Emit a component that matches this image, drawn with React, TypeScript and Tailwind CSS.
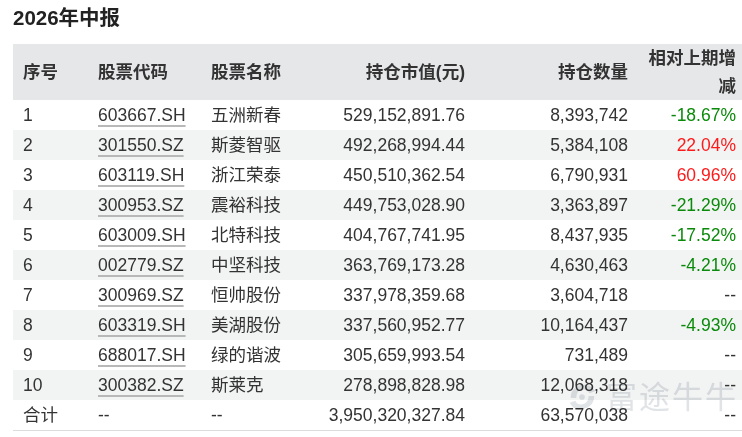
import React from 'react';

interface Holding {
  no: string;
  code: string;
  name: string;
  value: string;
  shares: string;
  change: string;
}

const rows: Holding[] = [
  { no: '1', code: '603667.SH', name: '五洲新春', value: '529,152,891.76', shares: '8,393,742', change: '-18.67%' },
  { no: '2', code: '301550.SZ', name: '斯菱智驱', value: '492,268,994.44', shares: '5,384,108', change: '22.04%' },
  { no: '3', code: '603119.SH', name: '浙江荣泰', value: '450,510,362.54', shares: '6,790,931', change: '60.96%' },
  { no: '4', code: '300953.SZ', name: '震裕科技', value: '449,753,028.90', shares: '3,363,897', change: '-21.29%' },
  { no: '5', code: '603009.SH', name: '北特科技', value: '404,767,741.95', shares: '8,437,935', change: '-17.52%' },
  { no: '6', code: '002779.SZ', name: '中坚科技', value: '363,769,173.28', shares: '4,630,463', change: '-4.21%' },
  { no: '7', code: '300969.SZ', name: '恒帅股份', value: '337,978,359.68', shares: '3,604,718', change: '--' },
  { no: '8', code: '603319.SH', name: '美湖股份', value: '337,560,952.77', shares: '10,164,437', change: '-4.93%' },
  { no: '9', code: '688017.SH', name: '绿的谐波', value: '305,659,993.54', shares: '731,489', change: '--' },
  { no: '10', code: '300382.SZ', name: '斯莱克', value: '278,898,828.98', shares: '12,068,318', change: '--' },
];

const changeColor = (c: string) => {
  if (c === '--') return 'text-[#333]';
  return c.startsWith('-') ? 'text-[#0a8a0a]' : 'text-[#ff1a1a]';
};

export default function App() {
  return (
    <div
      className="relative w-[742px] h-[437px] overflow-hidden bg-white text-[#333]"
      style={{ fontFamily: 'Arial, "Liberation Sans", "Noto Sans CJK SC", sans-serif' }}
    >
      <h2 className="pl-[13px] pt-[4px] h-[44px] text-[20.5px] font-bold leading-[28px] text-[#222]">2026年中报</h2>

      <table className="ml-[13px] w-[729px] table-fixed border-collapse text-[17.5px]">
        <colgroup>
          <col className="w-[75px]" />
          <col className="w-[113px]" />
          <col className="w-[100px]" />
          <col className="w-[174px]" />
          <col className="w-[163px]" />
          <col className="w-[104px]" />
        </colgroup>
        <thead>
          <tr className="h-[56px] bg-[#e6e7e9] font-bold text-[#333]">
            <th className="pl-[10px] text-left font-bold">序号</th>
            <th className="pl-[10px] text-left font-bold">股票代码</th>
            <th className="pl-[10px] text-left font-bold">股票名称</th>
            <th className="pr-[10px] text-right font-bold">持仓市值(元)</th>
            <th className="pr-[10px] text-right font-bold">持仓数量</th>
            <th className="pr-[6px] pl-[8px] text-right font-bold leading-[28px]">相对上期增减</th>
          </tr>
        </thead>
        <tbody>
          {rows.map((r, i) => (
            <tr key={r.no} className={`h-[30px] ${i % 2 === 1 ? 'bg-[#f2f3f3]' : 'bg-white'}`}>
              <td className="pl-[10px]">{r.no}</td>
              <td className="pl-[10px]">
                <span className="underline decoration-[#b8b8b8] decoration-[1.5px] underline-offset-[4px]">{r.code}</span>
              </td>
              <td className="pl-[10px]">{r.name}</td>
              <td className="pr-[10px] text-right">{r.value}</td>
              <td className="pr-[10px] text-right">{r.shares}</td>
              <td className={`pr-[6px] text-right ${changeColor(r.change)}`}>{r.change}</td>
            </tr>
          ))}
          <tr className="h-[30px] border-b border-[#dcdcdc]">
            <td className="pl-[10px]">合计</td>
            <td className="pl-[10px]">--</td>
            <td className="pl-[10px]">--</td>
            <td className="pr-[10px] text-right">3,950,320,327.84</td>
            <td className="pr-[10px] text-right">63,570,038</td>
            <td className="pr-[6px] text-right">--</td>
          </tr>
        </tbody>
      </table>

      {/* watermark, multiplied so table text stays dark on top */}
      <div className="pointer-events-none absolute left-[566px] top-[381px] flex items-center gap-[8px] mix-blend-multiply">
        <svg width="32" height="32" viewBox="0 0 34 34" fill="none">
          <path d="M5 18 C5 9 11 4 19 4 C25 4 29 7 31 11 L25 13 C23 10 21 9 18 9 C13 9 11 13 11 18 Z" fill="#e1e4e7" />
          <path d="M30 16 C30 25 23 30 15 30 C9 30 6 27 4 23 L10 21 C11 24 13 25 16 25 C21 25 24 21 24 16 Z" fill="#e1e4e7" />
          <circle cx="17" cy="17" r="3" fill="#e1e4e7" />
        </svg>
        <span className="text-[31px] leading-none tracking-[2px] text-[#e1e4e7]">富途牛牛</span>
      </div>
    </div>
  );
}
